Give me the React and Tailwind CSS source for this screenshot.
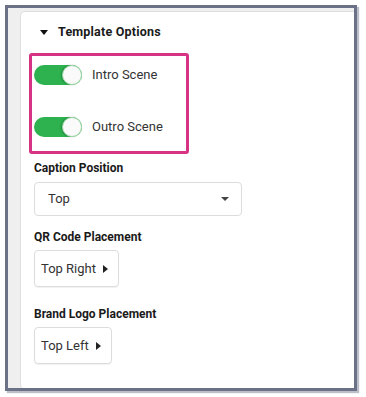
import React from "react";

function Toggle() {
  return (
    <div className="relative w-[48px] h-[20px] rounded-full bg-[#2db24f] shrink-0">
      <div className="absolute right-0 top-0 w-[20px] h-[20px] rounded-full bg-[#fafafa] border border-[#9fd9a9] shadow-[-1px_0_2px_rgba(0,0,0,0.25)]" />
    </div>
  );
}

function CaretRight() {
  return (
    <svg width="5" height="8" viewBox="0 0 5 8" className="ml-[7px]">
      <path d="M0 0 L5 4 L0 8 Z" fill="#222" />
    </svg>
  );
}

export default function App() {
  const sans = { fontFamily: "Roboto, 'Liberation Sans', sans-serif" };
  return (
    <div className="w-[366px] h-[397px] bg-white pl-[5px] pt-[5px]" style={sans}>
      <div className="w-[352px] h-[386px] border-[3px] border-[#6b7287] bg-[#efefef] shadow-[2px_2px_1px_rgba(107,114,135,0.45)] flex pl-[12px] pt-[3px]">
        <div className="flex-1 bg-white rounded-tl-[5px] rounded-bl-[4px] border-l border-t border-[#dedede] pl-[13px] pt-[12px] flex flex-col">
          <div className="flex items-center h-[16px]">
            <svg width="8" height="5" viewBox="0 0 8 5" className="ml-[6px]">
              <path d="M0 0 L8 0 L4 5 Z" fill="#111" />
            </svg>
            <span className="ml-[10px] text-[12.5px] font-bold text-[#1a1a1a] tracking-[0.2px]">
              Template Options
            </span>
          </div>

          <div className="mt-[13px] ml-[-5px] w-[160px] h-[101px] border-[3px] border-[#d63384] rounded-[3px] pl-[2px] pt-[9px]">
            <div className="flex items-center h-[20px]">
              <Toggle />
              <span className="ml-[10px] text-[13px] text-[#333]">Intro Scene</span>
            </div>
            <div className="flex items-center h-[20px] mt-[32px]">
              <Toggle />
              <span className="ml-[10px] text-[13px] text-[#333]">Outro Scene</span>
            </div>
          </div>

          <div className="mt-[7px] h-[14px] leading-[14px] text-[12px] font-bold text-[#1a1a1a]">
            Caption Position
          </div>
          <div className="mt-[7px] w-[208px] h-[34px] border border-[#dcdcdc] rounded-[4px] flex items-center pl-[13px] pr-[12px]">
            <span className="text-[13px] text-[#333] flex-1">Top</span>
            <svg width="8" height="4" viewBox="0 0 8 4">
              <path d="M0 0 L8 0 L4 4 Z" fill="#444" />
            </svg>
          </div>

          <div className="mt-[14px] h-[14px] leading-[14px] text-[12px] font-bold text-[#1a1a1a]">
            QR Code Placement
          </div>
          <div className="mt-[6px] w-[85px] h-[37px] border border-[#dcdcdc] rounded-[4px] flex items-center pl-[6px] shadow-[0_1px_1px_rgba(0,0,0,0.06)]">
            <span className="text-[13px] text-[#333]">Top Right</span>
            <CaretRight />
          </div>

          <div className="mt-[20px] h-[14px] leading-[14px] text-[12px] font-bold text-[#1a1a1a]">
            Brand Logo Placement
          </div>
          <div className="mt-[6px] w-[78px] h-[37px] border border-[#dcdcdc] rounded-[4px] flex items-center pl-[6px] shadow-[0_1px_1px_rgba(0,0,0,0.06)]">
            <span className="text-[13px] text-[#333]">Top Left</span>
            <CaretRight />
          </div>
        </div>
      </div>
    </div>
  );
}
